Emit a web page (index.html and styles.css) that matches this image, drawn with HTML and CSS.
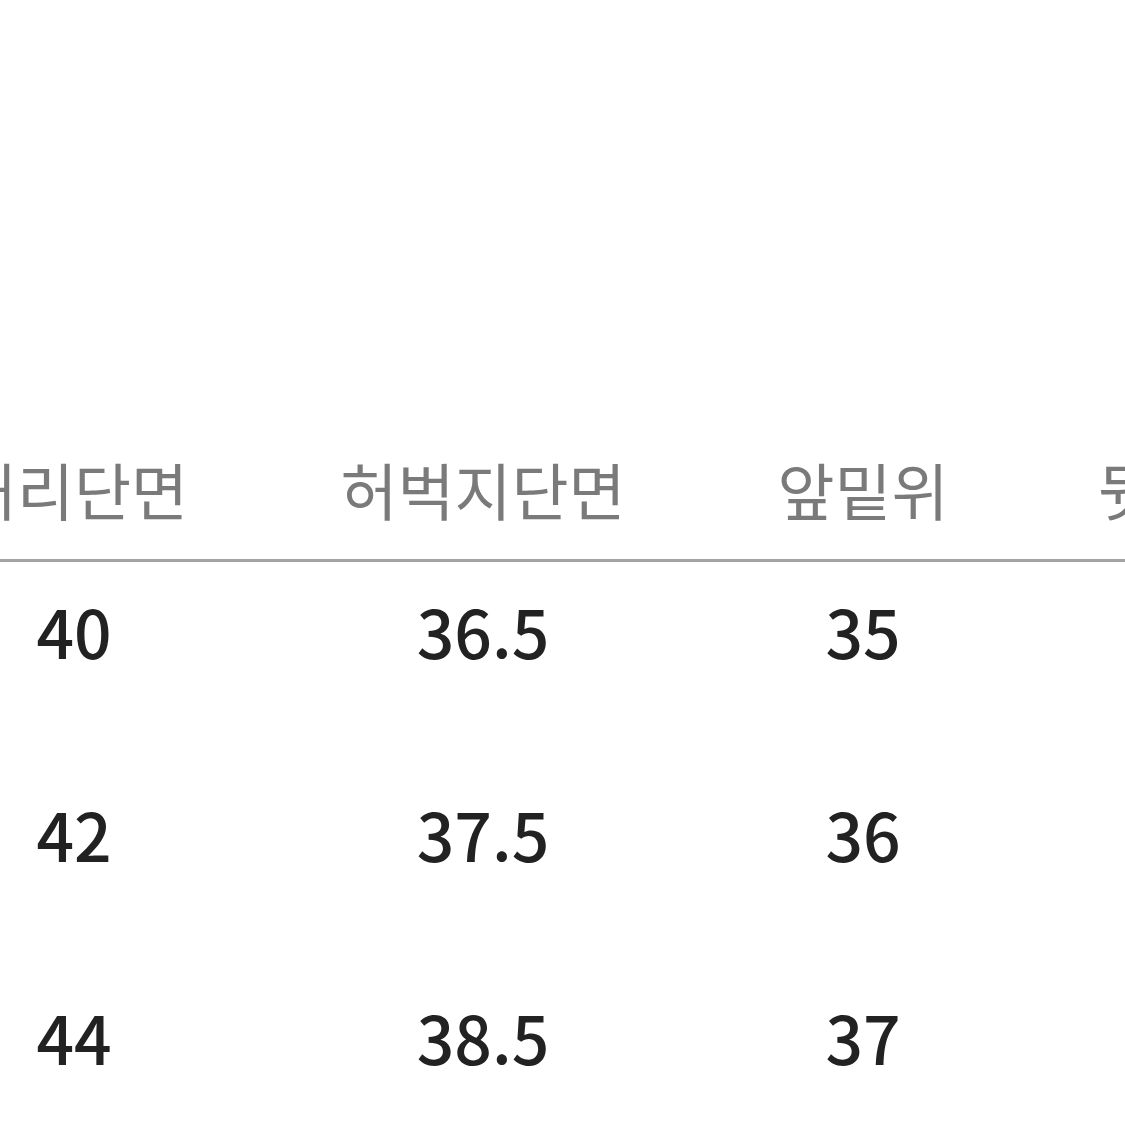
FILE: index.html
```html
<!DOCTYPE html>
<html lang="ko">
<head>
<meta charset="utf-8">
<link rel="stylesheet" href="styles.css">
</head>
<body>
<div class="page">
  <table class="size-table">
    <colgroup>
      <col class="c1"><col class="c2"><col class="c3"><col class="c4">
    </colgroup>
    <thead>
      <tr><th>허리단면</th><th>허벅지단면</th><th>앞밑위</th><th>뒷밑위</th></tr>
    </thead>
    <tbody>
      <tr><td>40</td><td>36.5</td><td>35</td><td>46</td></tr>
      <tr><td>42</td><td>37.5</td><td>36</td><td>47</td></tr>
      <tr><td>44</td><td>38.5</td><td>37</td><td>48</td></tr>
    </tbody>
  </table>
</div>
</body>
</html>
```

FILE: styles.css
```css
html, body {
  margin: 0;
  padding: 0;
  background: #ffffff;
  overflow: hidden;
  width: 1125px;
  height: 1125px;
}
.page {
  padding-top: 458px;
  margin-left: -130px;
  width: 1500px;
}
.size-table {
  border-collapse: collapse;
  table-layout: fixed;
  width: 1458px;
  font-family: "Noto Sans CJK KR", "Noto Sans", sans-serif;
}
.c1 { width: 408px; }
.c2 { width: 410px; }
.c3 { width: 350px; }
.c4 { width: 290px; }
.size-table th {
  font-weight: 400;
  font-size: 62px;
  line-height: 62px;
  color: #7a7a7a;
  padding: 0 0 39px 0;
  text-align: center;
  border-bottom: 3px solid #a3a3a3;
}
.size-table td {
  font-weight: 500;
  font-size: 66px;
  line-height: 66px;
  color: #222222;
  text-align: center;
  padding: 35px 0 102px 0;
}
```
